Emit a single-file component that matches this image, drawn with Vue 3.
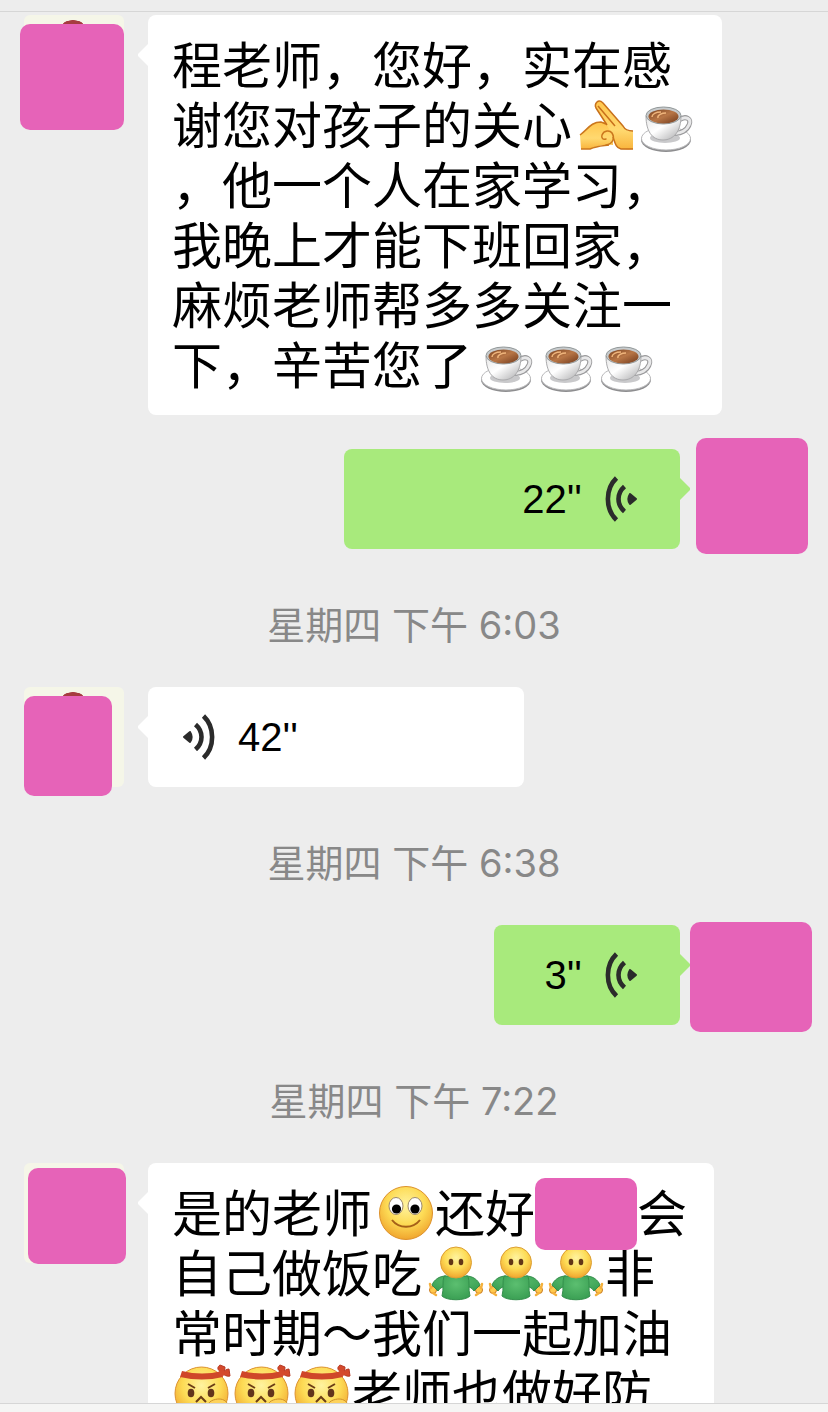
<script setup>
const messages = [
  {
    id: 1,
    type: "text",
    side: "left",
    cover: "one",
    lines: [
      [{ text: "程老师，您好，实在感" }],
      [{ text: "谢您对孩子的关心" }, { emoji: "pray" }, { emoji: "coffee" }],
      [{ text: "，他一个人在家学习，" }],
      [{ text: "我晚上才能下班回家，" }],
      [{ text: "麻烦老师帮多多关注一" }],
      [{ text: "下，辛苦您了" }, { emoji: "coffee" }, { emoji: "coffee" }, { emoji: "coffee" }],
    ],
  },
  { id: 2, type: "voice", side: "right", cover: "two", seconds: 22, width: 336 },
  { id: 3, type: "time", text: "星期四 下午 6:03" },
  { id: 4, type: "voice", side: "left", cover: "three", seconds: 42, width: 376 },
  { id: 5, type: "time", text: "星期四 下午 6:38" },
  { id: 6, type: "voice", side: "right", cover: "four", seconds: 3, width: 186 },
  { id: 7, type: "time", text: "星期四 下午 7:22" },
  {
    id: 8,
    type: "text",
    side: "left",
    cover: "five",
    lines: [
      [{ text: "是的老师" }, { emoji: "smile" }, { text: "还好" }, { hidden: true }, { text: "会" }],
      [{ text: "自己做饭吃" }, { emoji: "shrug" }, { emoji: "shrug" }, { emoji: "shrug" }, { text: "非" }],
      [{ text: "常时期～我们一起加油" }],
      [{ emoji: "fight" }, { emoji: "fight" }, { emoji: "fight" }, { text: "老师也做好防" }],
    ],
  },
];
</script>

<template>
  <div class="chat">
    <!-- emoji shapes -->
    <svg class="sprites" aria-hidden="true">
      <defs>
        <radialGradient id="skin" cx="50%" cy="35%" r="65%">
          <stop offset="0" stop-color="#fff3a0" />
          <stop offset="0.55" stop-color="#fddb55" />
          <stop offset="1" stop-color="#f0a52e" />
        </radialGradient>
        <linearGradient id="hand" x1="0" y1="0" x2="0" y2="1">
          <stop offset="0" stop-color="#ffc64d" />
          <stop offset="0.6" stop-color="#ffd970" />
          <stop offset="1" stop-color="#f9b43c" />
        </linearGradient>
        <linearGradient id="china" x1="0" y1="0" x2="1" y2="1">
          <stop offset="0" stop-color="#e6e6e6" />
          <stop offset="0.45" stop-color="#ffffff" />
          <stop offset="1" stop-color="#a9a9ab" />
        </linearGradient>
        <linearGradient id="drink" x1="0" y1="0" x2="1" y2="1">
          <stop offset="0" stop-color="#7d4421" />
          <stop offset="0.5" stop-color="#b87646" />
          <stop offset="1" stop-color="#70391b" />
        </linearGradient>
        <radialGradient id="shirt" cx="50%" cy="35%" r="75%">
          <stop offset="0" stop-color="#5cbf70" />
          <stop offset="1" stop-color="#369b50" />
        </radialGradient>
      </defs>

      <symbol id="emoji-coffee" viewBox="0 0 60 60">
        <ellipse cx="31" cy="45" rx="25" ry="12" fill="#8e8e90" />
        <ellipse cx="31" cy="43.500" rx="24.500" ry="11.500" fill="#fff" stroke="#b9b9bb" />
        <ellipse cx="30" cy="43" rx="15" ry="5" fill="#c9c9cb" />
        <path d="M44 25c7-5 13-1 10 5c-2 5-8 9-15 8" fill="none" stroke="#98989a" stroke-width="5" />
        <path d="M44 25c7-5 13-1 10 5c-2 5-8 9-15 8" fill="none" stroke="#e8e8e9" stroke-width="3" />
        <path d="M11 21c0 15 6 24 17 24s18-9 18-24z" fill="url(#china)" stroke="#aaaaac" />
        <ellipse cx="28.500" cy="20.500" rx="17.500" ry="8.500" fill="#c7cbcd" stroke="#929899" />
        <ellipse cx="28.500" cy="21.500" rx="15" ry="7" fill="url(#drink)" />
        <path d="M17 22c0-3 4-5 9-5M23 23c-1-3 4-5 8-5" fill="none" stroke="#efb57c" stroke-width="1.500" />
      </symbol>

      <symbol id="emoji-pray" viewBox="0 0 60 60">
        <path d="M5 40C13 34 16 26 26 27H38L38 50C30 49 21 51 15 54L6 54z" fill="url(#hand)" />
        <path d="M5 40C13 34 16 27 26 27l5 2M6 54l9 0c7-3 12-3 19-4" fill="none" stroke="#cb771d" stroke-width="1.500" />
        <path d="M22 7c2-2 4-1 6 1l20 23c2 4 5 5 10 5v18c-5 1-8 0-12 0c-5-1-6-6-8-12L32 30L21 13c-1-2-1-5 1-6z" fill="url(#hand)" />
        <path d="M58 36c-5 0-8-1-10-5L28 8c-2-2-4-3-6-1s-2 4-1 6l11 17M23 11l17 20M38 42c2 6 3 11 8 12h12" fill="none" stroke="#c8701b" stroke-width="1.500" stroke-linejoin="round" />
        <path d="M31 44c-3 1-5-1-4-4c2-5 8-5 10-2c3 5 1 11-6 12" fill="none" stroke="#cb771d" stroke-width="1.500" stroke-linecap="round" />
      </symbol>

      <symbol id="emoji-smile" viewBox="0 0 60 60">
        <circle cx="31" cy="30" r="26.500" fill="url(#skin)" stroke="#dd912b" />
        <ellipse cx="21" cy="23" rx="7" ry="8.500" fill="#fff" stroke="#9b876b" />
        <ellipse cx="40" cy="23" rx="7" ry="8.500" fill="#fff" stroke="#9b876b" />
        <circle cx="21.500" cy="26" r="4.600" fill="#000" />
        <circle cx="40" cy="26" r="4.600" fill="#000" />
        <path d="M17 37c7 9 21 9 28 0" fill="none" stroke="#a55f18" stroke-width="2" />
      </symbol>

      <symbol id="emoji-shrug" viewBox="1 0 60 60">
        <circle cx="9" cy="47" r="3.500" fill="#ffc94e" stroke="#c97b24" />
        <path d="M7 45l-1-4M9 50l3 2" stroke="#f5b13c" stroke-width="2.500" stroke-linecap="round" />
        <circle cx="55" cy="47" r="3.500" fill="#ffc94e" stroke="#c97b24" />
        <path d="M57 45l1-4M55 50l-3 2" stroke="#f5b13c" stroke-width="2.500" stroke-linecap="round" />
        <path d="M22 33c-7 0-12 4-14 9l6 6c2-3 4-4 6-4zM42 33c7 0 12 4 14 9l-6 6c-2-3-4-4-6-4z" fill="url(#shirt)" stroke="#338f4b" />
        <path d="M20 33h24c2 6 0 13 2 20c-5 5-23 5-28 0c2-7 0-14 2-20z" fill="url(#shirt)" stroke="#338f4b" />
        <circle cx="32" cy="19.500" r="15.500" fill="url(#skin)" stroke="#dda034" />
        <ellipse cx="27" cy="19" rx="2.300" ry="3.300" fill="#633616" />
        <ellipse cx="37" cy="19" rx="2.300" ry="3.300" fill="#633616" />
      </symbol>

      <symbol id="emoji-fight" viewBox="0 0 60 60">
        <circle cx="29.500" cy="30.500" r="26.500" fill="url(#skin)" stroke="#dd9230" />
        <path d="M10 8q20 5 40 0l1 6q-21 5-43 0z" fill="#cf4729" />
        <path d="M49 9c-4-2-4-5-1-7l5 2c0 3-1 4-2 6zM50 9c3-1 4-3 7-3l1 7c-3 1-6-1-8-3z" fill="#d4492c" stroke="#b73923" stroke-linejoin="round" />
        <circle cx="50" cy="10" r="3" fill="#d4492c" />
        <path d="M16 21l7 4M43 21l-7 4" stroke="#6b3d15" stroke-width="2" />
        <ellipse cx="19" cy="30" rx="3.300" ry="4.300" fill="#62341b" />
        <ellipse cx="39" cy="30" rx="3.300" ry="4.300" fill="#62341b" />
        <path d="M24 39l5-5l5 5" fill="none" stroke="#6b3d15" stroke-width="2" />
        <path d="M36 44c-1-6 7-8 11-8c5 0 9 3 9 8v9H40z" fill="#fdd25b" stroke="#ce922b" />
      </symbol>

      <symbol id="waves" viewBox="0 0 34 48">
        <path d="M2 24l6-5c2 3 2 7 0 10z" fill="#2b2b2b" stroke="#2b2b2b" stroke-width="2" stroke-linejoin="round" />
        <path d="M13.500 11.500c8 7 8 18 0 25M21.500 3c11.500 11 11.500 31 0 42" fill="none" stroke="#2b2b2b" stroke-width="4.600" />
      </symbol>
    </svg>

    <header class="chat__top"></header>

    <main class="chat__list">
      <template v-for="msg in messages" :key="msg.id">
        <p v-if="msg.type === 'time'" class="time">{{ msg.text }}</p>

        <div v-else :class="['row', 'row--' + msg.side]">
          <div class="avatar">
            <span :class="['cover', 'cover--' + msg.cover]"></span>
          </div>

          <!-- voice -->
          <button
            v-if="msg.type === 'voice'"
            class="bubble voice"
            type="button"
            :style="{ width: msg.width + 'px' }"
          >
            <svg class="voice__icon" aria-hidden="true"><use href="#waves" /></svg>
            <span>{{ msg.seconds }}''</span>
          </button>

          <!-- text -->
          <div v-else class="bubble text">
            <div v-for="(line, i) in msg.lines" :key="i" class="line">
              <template v-for="(part, j) in line" :key="j">
                <svg v-if="part.emoji" class="emoji"><use :href="'#emoji-' + part.emoji" /></svg>
                <span v-else-if="part.hidden" class="mask"></span>
                <span v-else>{{ part.text }}</span>
              </template>
            </div>
          </div>
        </div>
      </template>
    </main>

    <footer class="chat__bottom"></footer>
  </div>
</template>

<style>
body {
  background: #ededed;
}
</style>

<style scoped>
.chat {
  display: flex;
  flex-direction: column;
  height: 100vh;
  overflow: hidden;
  background: #ededed;
  color: #000;
  font-family: "Inter", "Noto Sans CJK SC", sans-serif;
}

.sprites {
  position: absolute;
  width: 0;
  height: 0;
}

.chat__top {
  flex: none;
  height: 11px;
  border-bottom: 1px solid #d6d6d6;
}

.chat__list {
  flex: 1;
  min-height: 0;
  padding-top: 3px;
  overflow: hidden;
}

.chat__bottom {
  flex: none;
  height: 8px;
  border-top: 1px solid #d6d6d6;
  background: #f5f5f4;
}

.row {
  display: flex;
  align-items: flex-start;
  gap: 24px;
  padding: 0 24px;
}

.row--right {
  flex-direction: row-reverse;
}

.row + .row {
  margin-top: 34px;
}

.time {
  margin: 48px 0 34px;
  text-align: center;
  font-size: 38px;
  line-height: 56px;
  color: #888;
}

/* Avatar */
.avatar {
  position: relative;
  flex: none;
  width: 100px;
  height: 100px;
}

.row--left .avatar {
  background: radial-gradient(ellipse 11px 5px at 49px 10px, #a63c40 90%, #f5f6e8 100%);
  border-radius: 6px;
}

.cover {
  position: absolute;
  border-radius: 10px;
  background: #e663b8;
}

.cover--one {
  inset: 9px 0 -15px -4px;
}

.cover--two {
  inset: -11px -4px -5px -8px;
}

.cover--three {
  inset: 9px 12px -9px 0;
}

.cover--four {
  inset: -3px -8px -7px -14px;
}

.cover--five {
  inset: 5px -2px -1px 4px;
}

/* Bubbles */
.bubble {
  position: relative;
  box-sizing: border-box;
  border: none;
  border-radius: 8px;
  background: #fff;
}

.bubble::before {
  content: "";
  position: absolute;
  top: 28px;
  left: -10px;
  width: 11px;
  height: 24px;
  background: inherit;
  clip-path: polygon(0 46%, 100% 0, 100% 100%, 0 54%);
}

.row--right .bubble {
  background: #a8ea7c;
}

.row--right .bubble::before {
  left: auto;
  right: -10px;
  clip-path: polygon(100% 46%, 0 0, 0 100%, 100% 54%);
}

.text {
  padding: 20px 27px 20px 24px;
  font-family: "Noto Sans CJK SC", sans-serif;
  font-size: 50px;
  line-height: 54px;
}

.line {
  display: flex;
  align-items: flex-start;
  height: 60px;
  white-space: nowrap;
}

.emoji {
  flex: none;
  width: 60px;
  height: 60px;
}

span + .emoji {
  margin-left: 3px;
}

.mask {
  position: relative;
  z-index: 1;
  flex: none;
  width: 102px;
  height: 72px;
  margin-top: -5px;
  border-radius: 10px;
  background: #e663b8;
}

.voice {
  display: flex;
  align-items: center;
  gap: 22px;
  height: 100px;
  padding: 0 34px;
  font-family: "Liberation Sans", sans-serif;
  font-size: 40px;
  color: #000;
  cursor: pointer;
}

.row--right .voice {
  flex-direction: row-reverse;
  padding: 0 42px;
}

.voice__icon {
  width: 34px;
  height: 48px;
}

.row--right .voice__icon {
  transform: scaleX(-1);
}
</style>
